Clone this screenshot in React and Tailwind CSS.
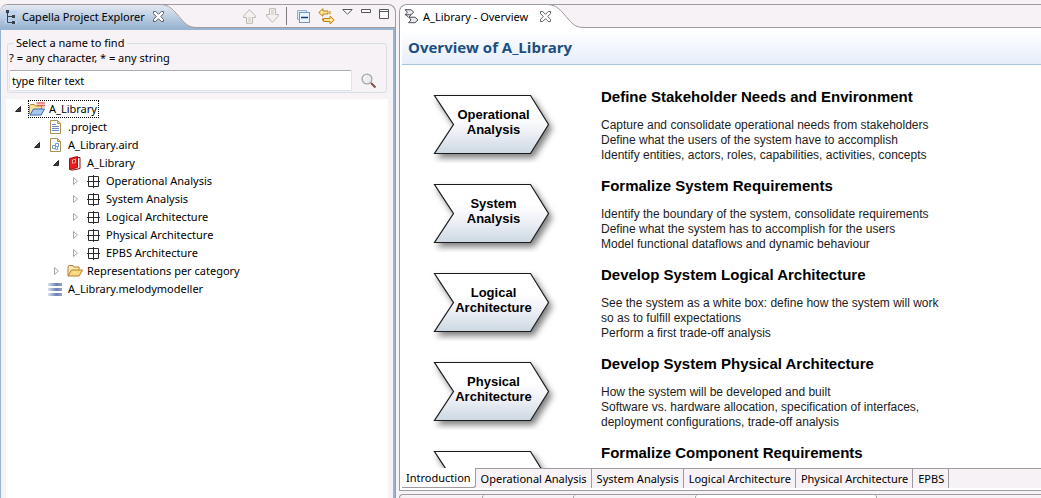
import React from "react";

function CloseIcon() {
  return (
    <svg width="11" height="11" viewBox="0 0 11 11" fill="#fff" stroke="#5d6068" strokeWidth="1">
      <path d="M.5 .5h2.2L5.5 3.3 8.3 .5h2.2v2.2L7.7 5.5l2.8 2.8v2.2H8.3L5.5 7.7 2.7 10.5H.5V8.3L3.3 5.5.5 2.7z" />
    </svg>
  );
}

function ExplorerIcon() {
  return (
    <svg width="16" height="16" viewBox="0 0 16 16">
      <path d="M3 3h12M0 8h9M3 13h12" stroke="#bcd2f2" strokeWidth="3" />
      <path d="M5.500 3v10.500H10M5.500 7.500H10" fill="none" stroke="#38424c" />
      <rect x="4" y="1" width="3" height="3" fill="#38424c" />
      <rect x="10" y="6" width="3" height="3" fill="#38424c" />
      <rect x="10" y="12" width="3" height="3" fill="#38424c" />
    </svg>
  );
}

function UpIcon() {
  return (
    <svg width="13" height="15" viewBox="0 0 13 15">
      <path d="M6.5 .7 12.3 6.8v1.7H9.5v5.8h-6V8.5H.7V6.8z" fill="#f3f0ee" stroke="#bcb8b6" strokeLinejoin="round" />
      <path d="M5 8h3v5H5z" fill="#dedbd6" />
    </svg>
  );
}

function DownIcon() {
  return (
    <svg width="13" height="15" viewBox="0 0 13 15">
      <path d="M6.5 14.3 12.3 8.2V6.5H9.5V.7h-6v5.8H.7v1.7z" fill="#f3f0ee" stroke="#bcb8b6" strokeLinejoin="round" />
      <path d="M5 2h3v5H5z" fill="#dedbd6" />
    </svg>
  );
}

function CollapseIcon() {
  return (
    <svg width="13" height="13" viewBox="0 0 13 13">
      <path d="M.5 9.5v-9h9v2" fill="#d8ebfa" stroke="#8db3d9" />
      <path d="M.5 9.5h2" stroke="#8db3d9" />
      <rect x="2.500" y="2.500" width="10" height="10" fill="#e9f5fd" stroke="#7894b8" />
      <path d="M4 7.500h7" stroke="#153f7c" strokeWidth="1.400" />
    </svg>
  );
}

function LinkIcon() {
  return (
    <svg width="17" height="17" viewBox="0 0 17 17" fill="#ffe79a" stroke="#bd850b" strokeLinejoin="round">
      <path d="M.7 4.500 5 .7v2.300h5v3H5v2.300z" />
      <path d="M16.200 12 12 8.200v2.300H5.500v3H12v2.300z" />
      <path d="M12 3v3.500" fill="none" />
      <path d="M4.500 10.500v2" fill="none" />
    </svg>
  );
}

function SearchIcon() {
  return (
    <svg width="16" height="16" viewBox="0 0 16 16">
      <path d="M10 10l4.500 4.500" stroke="#7c5048" strokeWidth="2" />
      <circle cx="6" cy="6" r="4.900" fill="#e9edf4" stroke="#aaa89e" strokeWidth="1.300" />
      <path d="M3 6a3 3 0 0 1 3-3" fill="none" stroke="#fff" strokeWidth="1.400" />
    </svg>
  );
}

function EditorIcon() {
  return (
    <svg width="15" height="15" viewBox="0 0 15 15" fill="#e9eaee" stroke="#4a4d54" strokeLinejoin="round">
      <path d="M1 .7h6L9.7 3.2 7 5.8H1l2.4-2.6z" />
      <path d="M5 8.2h6l3 2.7-3 2.8H4.5L7 11z" />
      <path d="M7 5.8 5 8.2M2 5.8l2.5 2.5" fill="none" />
    </svg>
  );
}

function TreeIcon({ kind }) {
  if (kind === "project")
    return (
      <svg width="16" height="16" viewBox="0 0 16 16">
        <path d="M7 1h9v6H7z" fill="#fbc8c8" />
        <path d="M8 2h8M8 4.500h8" stroke="#ef5350" />
        <path d="M.5 13V4.500l1-1h4l1 1.500h6V8" fill="#f9dfa0" stroke="#bd8a32" />
        <path d="M1 14 4.500 8h11L12.200 14z" fill="#a8c9ef" stroke="#3d68ab" strokeLinejoin="round" />
      </svg>
    );
  if (kind === "file" || kind === "aird")
    return (
      <svg width="16" height="16" viewBox="0 0 16 16">
        <path d="M2.500 1.500h7l3 3v10h-10z" fill="#fafcff" stroke="#a99354" />
        <path d="M9.500 1.500v3h3z" fill="#efd68b" stroke="#b49546" />
        {kind === "file" ? (
          <path d="M4 5.500h4M4 7.500h7M4 9.500h7M4 11.500h7" stroke="#718fc5" />
        ) : (
          <path d="M7.500 6.500h3v3h-3zM4.500 8.500h3v3h-3zM7.500 11.500v1h2v-3" fill="none" stroke="#6da1cd" />
        )}
      </svg>
    );
  if (kind === "book")
    return (
      <svg width="16" height="16" viewBox="0 0 16 16">
        <path d="M2.500 3.500 10.500 1.500v11l-8 2z" fill="#ee1c1c" stroke="#b40b0b" />
        <path d="M11 2.500h2v11L5 15.200l-2-.7" fill="none" stroke="#8d1111" />
        <path d="M5.500 5 8.500 4.300v3.200l-3 .7z" fill="#c30c0c" stroke="#ffd5d5" strokeWidth=".8" />
      </svg>
    );
  if (kind === "package")
    return (
      <svg width="16" height="16" viewBox="0 0 16 16" fill="none" stroke="#2b2b2b">
        <path d="M2.500 3.500h10v10h-10zM7.500 2v13M1 8.500h13" />
      </svg>
    );
  if (kind === "folder")
    return (
      <svg width="16" height="16" viewBox="0 0 16 16" strokeLinejoin="round">
        <path d="M1 13V4l1-1.500h4L7 4h5v3" fill="#fbe9b6" stroke="#b5802d" />
        <path d="M1 13 4.500 7h11L12 13z" fill="#fbd983" stroke="#b5802d" />
      </svg>
    );
  return (
    <svg width="16" height="16" viewBox="0 0 16 16">
      <defs>
        <linearGradient id="bars" x1="0" x2="1">
          <stop offset="0" stopColor="#d9e0ef" />
          <stop offset=".6" stopColor="#6b82b3" />
          <stop offset="1" stopColor="#8fa3ca" />
        </linearGradient>
      </defs>
      <path d="M0 2h14v3H0zM0 7h14v3H0zM0 12h14v3H0z" fill="url(#bars)" />
    </svg>
  );
}

function Arrow({ state }) {
  return (
    <svg width="8" height="8" viewBox="0 0 8 8" className="shrink-0">
      {state === "open" && <path d="M6.500 1.500v5H1.500z" fill="#404040" stroke="#262626" />}
      {state === "closed" && <path d="M2.500 .5v7L6.500 4z" fill="#fff" stroke="#a6a6a6" />}
    </svg>
  );
}

const tree = [
  { label: "A_Library", kind: "project", state: "open", pad: "pl-[8px]", focused: true },
  { label: ".project", kind: "file", pad: "pl-[27px]" },
  { label: "A_Library.aird", kind: "aird", state: "open", pad: "pl-[27px]" },
  { label: "A_Library", kind: "book", state: "open", pad: "pl-[46px]" },
  { label: "Operational Analysis", kind: "package", state: "closed", pad: "pl-[65px]" },
  { label: "System Analysis", kind: "package", state: "closed", pad: "pl-[65px]" },
  { label: "Logical Architecture", kind: "package", state: "closed", pad: "pl-[65px]" },
  { label: "Physical Architecture", kind: "package", state: "closed", pad: "pl-[65px]" },
  { label: "EPBS Architecture", kind: "package", state: "closed", pad: "pl-[65px]" },
  { label: "Representations per category", kind: "folder", state: "closed", pad: "pl-[46px]" },
  { label: "A_Library.melodymodeller", kind: "model", pad: "pl-[27px]" },
];

const phases = [
  {
    name: ["Operational", "Analysis"],
    title: "Define Stakeholder Needs and Environment",
    lines: [
      "Capture and consolidate operational needs from stakeholders",
      "Define what the users of the system have to accomplish",
      "Identify entities, actors, roles, capabilities, activities, concepts",
    ],
  },
  {
    name: ["System", "Analysis"],
    title: "Formalize System Requirements",
    lines: [
      "Identify the boundary of the system, consolidate requirements",
      "Define what the system has to accomplish for the users",
      "Model functional dataflows and dynamic behaviour",
    ],
  },
  {
    name: ["Logical", "Architecture"],
    title: "Develop System Logical Architecture",
    lines: [
      "See the system as a white box: define how the system will work",
      "so as to fulfill expectations",
      "Perform a first trade-off analysis",
    ],
  },
  {
    name: ["Physical", "Architecture"],
    title: "Develop System Physical Architecture",
    lines: [
      "How the system will be developed and built",
      "Software vs. hardware allocation, specification of interfaces,",
      "deployment configurations, trade-off analysis",
    ],
  },
  { name: [], title: "Formalize Component Requirements", lines: [] },
];

const pages = [
  "Introduction",
  "Operational Analysis",
  "System Analysis",
  "Logical Architecture",
  "Physical Architecture",
  "EPBS",
];

function Explorer() {
  return (
    <section className="flex w-[396px] shrink-0 flex-col overflow-hidden rounded-t-lg border-t border-r border-[#a09ba0]">
      <header className="flex h-[23px] shrink-0">
        <div className="grid w-[197px] shrink-0">
          <svg className="col-start-1 row-start-1" width="197" height="23" viewBox="0 0 197 23">
            <defs>
              <linearGradient id="tab" x1="0" x2="0" y1="0" y2="1">
                <stop offset="0" stopColor="#e3e9f3" />
                <stop offset="1" stopColor="#99b4d1" />
              </linearGradient>
            </defs>
            <path d="M0 0h160c9 0 13 5 19 12s9 10.500 18 10.500V23H0z" fill="url(#tab)" />
            <path d="M160 -.5c9 0 13 5 19 12s9 11 18 11" fill="none" stroke="#a09ba0" />
          </svg>
          <div className="col-start-1 row-start-1 flex items-center pl-[2px]">
            <ExplorerIcon />
            <h2 className="ml-1 w-[131px] whitespace-nowrap">Capella Project Explorer</h2>
            <button aria-label="Close Capella Project Explorer"><CloseIcon /></button>
          </div>
        </div>
        <div className="flex flex-1 items-start justify-end border-b border-[#a09ba0] pr-[6px]">
          <button aria-label="Previous" className="mt-[4px] mr-[10px]"><UpIcon /></button>
          <button aria-label="Next" className="mt-[3px] mr-[7px]"><DownIcon /></button>
          <span className="mt-[2px] mr-[10px] h-[18px] w-px bg-[#7b7b7b]" />
          <button aria-label="Collapse all" className="mt-[5px] mr-[8px]"><CollapseIcon /></button>
          <button aria-label="Link with editor" className="mt-[3px] mr-[7px]"><LinkIcon /></button>
          <button aria-label="View menu" className="mt-[4px] mr-[8px]">
            <svg width="11" height="6" viewBox="0 0 11 6"><path d="M.7 .5h9.600L5.500 5.200z" fill="#fff" stroke="#58555a" /></svg>
          </button>
          <button aria-label="Minimize" className="mt-[4px] mr-[8px]">
            <svg width="10" height="4" viewBox="0 0 10 4"><path d="M.5 .5h9v3h-9z" fill="#fff" stroke="#58555a" /></svg>
          </button>
          <button aria-label="Maximize" className="mt-[4px]">
            <svg width="10" height="10" viewBox="0 0 10 10"><path d="M.5 .5h9v9h-9zM.5 2.500h9" fill="#fff" stroke="#58555a" /></svg>
          </button>
        </div>
      </header>
      <div className="flex min-h-0 flex-1 flex-col border-t-2 border-r-2 border-l border-[#99b4d1] px-[5px]">
        <fieldset className="mx-px mt-[5px] rounded-[3px] border border-[#d5dfe5] px-px pb-px">
          <legend className="ml-[4px] px-[3px] leading-[16px]">Select a name to find</legend>
          <label htmlFor="filter" className="block leading-[14px]">? = any character, * = any string</label>
          <div className="mt-[5px] flex items-center gap-[9px]">
            <input
              id="filter"
              defaultValue="type filter text"
              className="h-[21px] min-w-0 flex-1 rounded-[2px] border border-[#dde3ea] border-t-[#abadb3] bg-white px-[2px]"
            />
            <button aria-label="Search" className="mr-[8px]"><SearchIcon /></button>
          </div>
        </fieldset>
        <ul className="mt-[6px] flex-1 bg-white pt-px">
          {tree.map((n, i) => (
            <li key={i} className={"flex h-[18px] items-center " + n.pad}>
              <Arrow state={n.state} />
              <span
                className={
                  "ml-[6px] flex h-[18px] items-center gap-[4px] border border-dotted pr-px whitespace-nowrap " +
                  (n.focused ? "border-black" : "border-transparent")
                }
              >
                <TreeIcon kind={n.kind} />
                {n.label}
              </span>
            </li>
          ))}
        </ul>
      </div>
    </section>
  );
}

function Phase({ phase }) {
  return (
    <li className="flex h-[89px] shrink-0">
      <div className="grid h-[72px] w-[130px] shrink-0">
        <svg className="col-start-1 row-start-1" width="130" height="76" viewBox="0 0 130 76">
          <defs>
            <linearGradient id="chevron" x1="0" x2="0" y1="0" y2="1">
              <stop offset=".35" stopColor="#fff" />
              <stop offset=".6" stopColor="#f1f2f8" />
              <stop offset="1" stopColor="#ccd8e2" />
            </linearGradient>
            <filter id="shade" x="-10%" y="-10%" width="125%" height="135%">
              <feDropShadow dx="3" dy="4" stdDeviation="3" floodColor="#000" floodOpacity=".5" />
            </filter>
          </defs>
          <path d="M4.500 8.500h96l18 29-18 29h-96l19-29z" fill="url(#chevron)" stroke="#1c1c1c" strokeWidth="1.200" filter="url(#shade)" />
        </svg>
        <div className="col-start-1 row-start-1 pt-[20px] pl-[8px] pr-[11px] text-center text-[13px] leading-[15px] font-bold">
          {phase.name.map((w) => (
            <p key={w}>{w}</p>
          ))}
        </div>
      </div>
      <div className="ml-[41px] whitespace-nowrap">
        <h3 className="text-[15px] leading-[20px] font-bold">{phase.title}</h3>
        <div className="mt-[11px] text-[12px] leading-[15px] text-[#1c1c1c]">
          {phase.lines.map((l) => (
            <p key={l}>{l}</p>
          ))}
        </div>
      </div>
    </li>
  );
}

function Editor() {
  return (
    <main className="flex min-h-0 min-w-0 flex-1 flex-col rounded-tl-lg border-t border-b border-l border-[#a09ba0] bg-white pb-[2px]">
      <header className="flex h-[23px] shrink-0 overflow-hidden rounded-tl-lg bg-[#f7f2f6]">
        <div className="grid w-[184px] shrink-0">
          <svg className="col-start-1 row-start-1" width="184" height="23" viewBox="0 0 184 23">
            <path d="M0 0h147c9 0 13 5 19 12s9 10.500 18 10.500V23H0z" fill="#fff" />
            <path d="M147 -.5c9 0 13 5 19 12s9 11 18 11" fill="none" stroke="#a09ba0" />
          </svg>
          <div className="col-start-1 row-start-1 flex items-center pl-[4px]">
            <EditorIcon />
            <span className="ml-1 w-[117px] whitespace-nowrap">A_Library - Overview</span>
            <button aria-label="Close A_Library - Overview"><CloseIcon /></button>
          </div>
        </div>
        <div className="flex-1 border-b border-[#a09ba0]" />
      </header>
      <h1 className="mt-[2px] ml-[2px] h-[35px] shrink-0 border-b border-[#a9c6de] bg-gradient-to-b from-white to-[#e6eefa] pl-[6px] font-['Open_Sans','Noto_Sans',sans-serif] text-[15px] leading-[34px] font-bold text-[#1b4f82]">
        Overview of A_Library
      </h1>
      <ul className="flex min-h-0 flex-1 flex-col overflow-hidden pt-[22px] pl-[30px] font-['Liberation_Sans',Arial,sans-serif]">
        {phases.map((p) => (
          <Phase key={p.title} phase={p} />
        ))}
      </ul>
      <nav className="ml-[2px] flex h-[20px] shrink-0 bg-[#f7f2f6]">
        {pages.map((p, i) => (
          <button
            key={p}
            className={
              "shrink-0 border-r border-[#a09ba0] pr-[4px] leading-[18px] whitespace-nowrap " +
              (i === 0 ? "rounded-br-[3px] border-b bg-white pl-[4px]" : "border-t pl-[5px]")
            }
          >
            {p}
          </button>
        ))}
        <div className="flex-1 border-t border-[#a09ba0]" />
      </nav>
    </main>
  );
}

function LowerTabs() {
  return (
    <div className="mt-[3px] flex h-[4px] shrink-0 overflow-hidden rounded-tl-lg border-t border-l border-[#a09ba0]">
      <span className="w-[82px] shrink-0" />
      <span className="w-[91px] shrink-0 rounded-tl-lg border-l border-[#a09ba0]" />
      <span className="w-[122px] shrink-0 rounded-tl-lg border-l border-[#a09ba0]" />
      <span className="w-[182px] shrink-0 rounded-tl-lg rounded-tr-lg border-r border-l border-[#a09ba0] bg-white" />
    </div>
  );
}

export default function App() {
  return (
    <div className="flex h-screen gap-[3px] overflow-hidden bg-[#f7f2f6] pt-[4px] font-['Noto_Sans','Open_Sans',sans-serif] text-[11px] leading-[16px] text-black">
      <Explorer />
      <div className="flex min-w-0 flex-1 flex-col">
        <Editor />
        <LowerTabs />
      </div>
    </div>
  );
}
